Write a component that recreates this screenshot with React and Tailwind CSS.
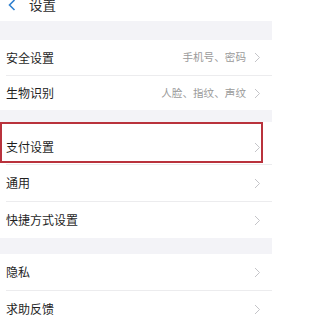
import React from "react";

const Chevron = () => (
  <svg width="7" height="11" viewBox="0 0 7 11" className="shrink-0">
    <path d="M1 1 L5.5 5.5 L1 10" fill="none" stroke="#c4c4c8" strokeWidth="1" />
  </svg>
);

function Row({ label, value, className = "" }) {
  return (
    <div className={`flex items-center pl-[6px] pr-[11px] ${className}`}>
      <span className="text-[12px] text-[#1f1f1f] leading-none">{label}</span>
      <div className="ml-auto flex items-center gap-[8px]">
        {value && (
          <span className="text-[10.6px] text-[#9a9a9a] leading-none">{value}</span>
        )}
        <Chevron />
      </div>
    </div>
  );
}

const Divider = () => <div className="ml-[6px] h-px bg-[#ececee]" />;
const Gap = ({ h }) => <div className={`bg-[#f3f3f7] ${h}`} />;

export default function App() {
  return (
    <div
      className="w-[272px] h-[321px] overflow-hidden bg-white"
      style={{ fontFamily: '"Noto Sans CJK SC", "Noto Sans", sans-serif' }}
    >
      {/* header, scrolled partly out of view */}
      <div className="h-[21px]">
        <div className="h-[10px] flex items-center">
          <svg width="8" height="12" viewBox="0 0 8 12" className="ml-[8px]">
            <path d="M6.5 1 L1.5 6 L6.5 11" fill="none" stroke="#2f80d0" strokeWidth="1.6" />
          </svg>
          <span className="ml-[13px] text-[13.5px] text-[#2a2a2a] leading-none">设置</span>
        </div>
      </div>

      <Gap h="h-[19px]" />

      <Row label="安全设置" value="手机号、密码" className="h-[35px]" />
      <Divider />
      <Row label="生物识别" value="人脸、指纹、声纹" className="h-[34px]" />

      <Gap h="h-[12px]" />

      <div className="relative">
        <Row label="支付设置" className="h-[42px] pt-[8px]" />
        <div className="absolute left-0 top-0 w-[263px] h-[41px] border-2 border-[#b9323c]" />
      </div>
      <Divider />
      <Row label="通用" className="h-[36px]" />
      <Divider />
      <Row label="快捷方式设置" className="h-[36px]" />

      <Gap h="h-[16px]" />

      <Row label="隐私" className="h-[36px]" />
      <Divider />
      <Row label="求助反馈" className="h-[36px]" />
    </div>
  );
}
